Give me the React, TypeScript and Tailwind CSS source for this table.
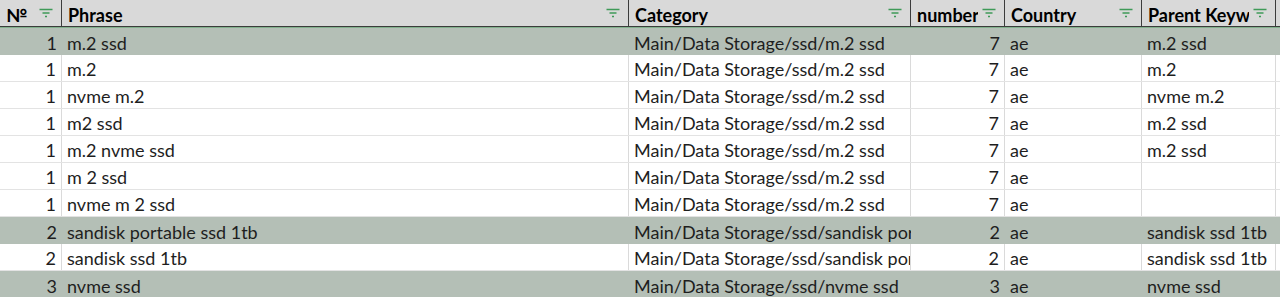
import React from "react";

const cols = [
  { w: "w-[62px]", key: "no", label: "№", align: "right" },
  { w: "w-[567px]", key: "phrase", label: "Phrase", align: "left" },
  { w: "w-[282px]", key: "cat", label: "Category", align: "left" },
  { w: "w-[94px]", key: "num", label: "number", align: "right" },
  { w: "w-[137px]", key: "country", label: "Country", align: "left" },
  { w: "w-[134px]", key: "parent", label: "Parent Keyword", align: "left" },
];

type Row = { no: string; phrase: string; cat: string; num: string; country: string; parent: string; hl: boolean };

const rows: Row[] = [
  { no: "1", phrase: "m.2 ssd", cat: "Main/Data Storage/ssd/m.2 ssd", num: "7", country: "ae", parent: "m.2 ssd", hl: true },
  { no: "1", phrase: "m.2", cat: "Main/Data Storage/ssd/m.2 ssd", num: "7", country: "ae", parent: "m.2", hl: false },
  { no: "1", phrase: "nvme m.2", cat: "Main/Data Storage/ssd/m.2 ssd", num: "7", country: "ae", parent: "nvme m.2", hl: false },
  { no: "1", phrase: "m2 ssd", cat: "Main/Data Storage/ssd/m.2 ssd", num: "7", country: "ae", parent: "m.2 ssd", hl: false },
  { no: "1", phrase: "m.2 nvme ssd", cat: "Main/Data Storage/ssd/m.2 ssd", num: "7", country: "ae", parent: "m.2 ssd", hl: false },
  { no: "1", phrase: "m 2 ssd", cat: "Main/Data Storage/ssd/m.2 ssd", num: "7", country: "ae", parent: "", hl: false },
  { no: "1", phrase: "nvme m 2 ssd", cat: "Main/Data Storage/ssd/m.2 ssd", num: "7", country: "ae", parent: "", hl: false },
  { no: "2", phrase: "sandisk portable ssd 1tb", cat: "Main/Data Storage/ssd/sandisk portable ssd 1tb", num: "2", country: "ae", parent: "sandisk ssd 1tb", hl: true },
  { no: "2", phrase: "sandisk ssd 1tb", cat: "Main/Data Storage/ssd/sandisk portable ssd 1tb", num: "2", country: "ae", parent: "sandisk ssd 1tb", hl: false },
  { no: "3", phrase: "nvme ssd", cat: "Main/Data Storage/ssd/nvme ssd", num: "3", country: "ae", parent: "nvme ssd", hl: true },
];

function FilterIcon() {
  return (
    <svg width="14" height="11" viewBox="0 0 14 11" className="shrink-0 mt-[1px]">
      <path d="M0.5 1.5H13.5M3.5 5H10.5M6 8.5H8" stroke="#3f9a58" strokeWidth="1.5" fill="none" />
    </svg>
  );
}

export default function App() {
  return (
    <div
      className="w-[1280px] h-[297px] overflow-hidden bg-white text-[18px] text-[#1e1e1e]"
      style={{ fontFamily: "Lato, 'Noto Sans', sans-serif" }}
    >
      <div className="flex h-[27px] bg-[#d9d9d9] border-b border-[#3c3c3c]">
        {cols.map((c) => (
          <div
            key={c.key}
            className={`${c.w} shrink-0 flex items-center border-r border-[#3c3c3c] pl-[6px] pr-[8px] overflow-hidden`}
          >
            <span className="flex-1 min-w-0 mr-[4px] overflow-hidden whitespace-nowrap font-bold text-black leading-[26px] pt-[3px]">
              {c.label}
            </span>
            <FilterIcon />
          </div>
        ))}
        <div className="flex-1" />
      </div>
      <div className="h-[1px] bg-[#82b18c]" />
      {rows.map((r, i) => (
        <div
          key={i}
          className={`flex h-[27px] ${r.hl ? "bg-[#b4bfb6]" : "bg-white border-b border-[#e3e3e3]"}`}
        >
          {cols.map((c) => {
            const v = (r as any)[c.key] as string;
            return (
              <div
                key={c.key}
                className={`${c.w} shrink-0 flex items-center overflow-hidden whitespace-nowrap px-[5px] pt-[2px] leading-[24px] ${
                  r.hl ? "" : "border-r border-[#dadada]"
                } ${c.align === "right" ? "justify-end" : "justify-start"}`}
              >
                {v}
              </div>
            );
          })}
          <div className="flex-1" />
        </div>
      ))}
    </div>
  );
}
